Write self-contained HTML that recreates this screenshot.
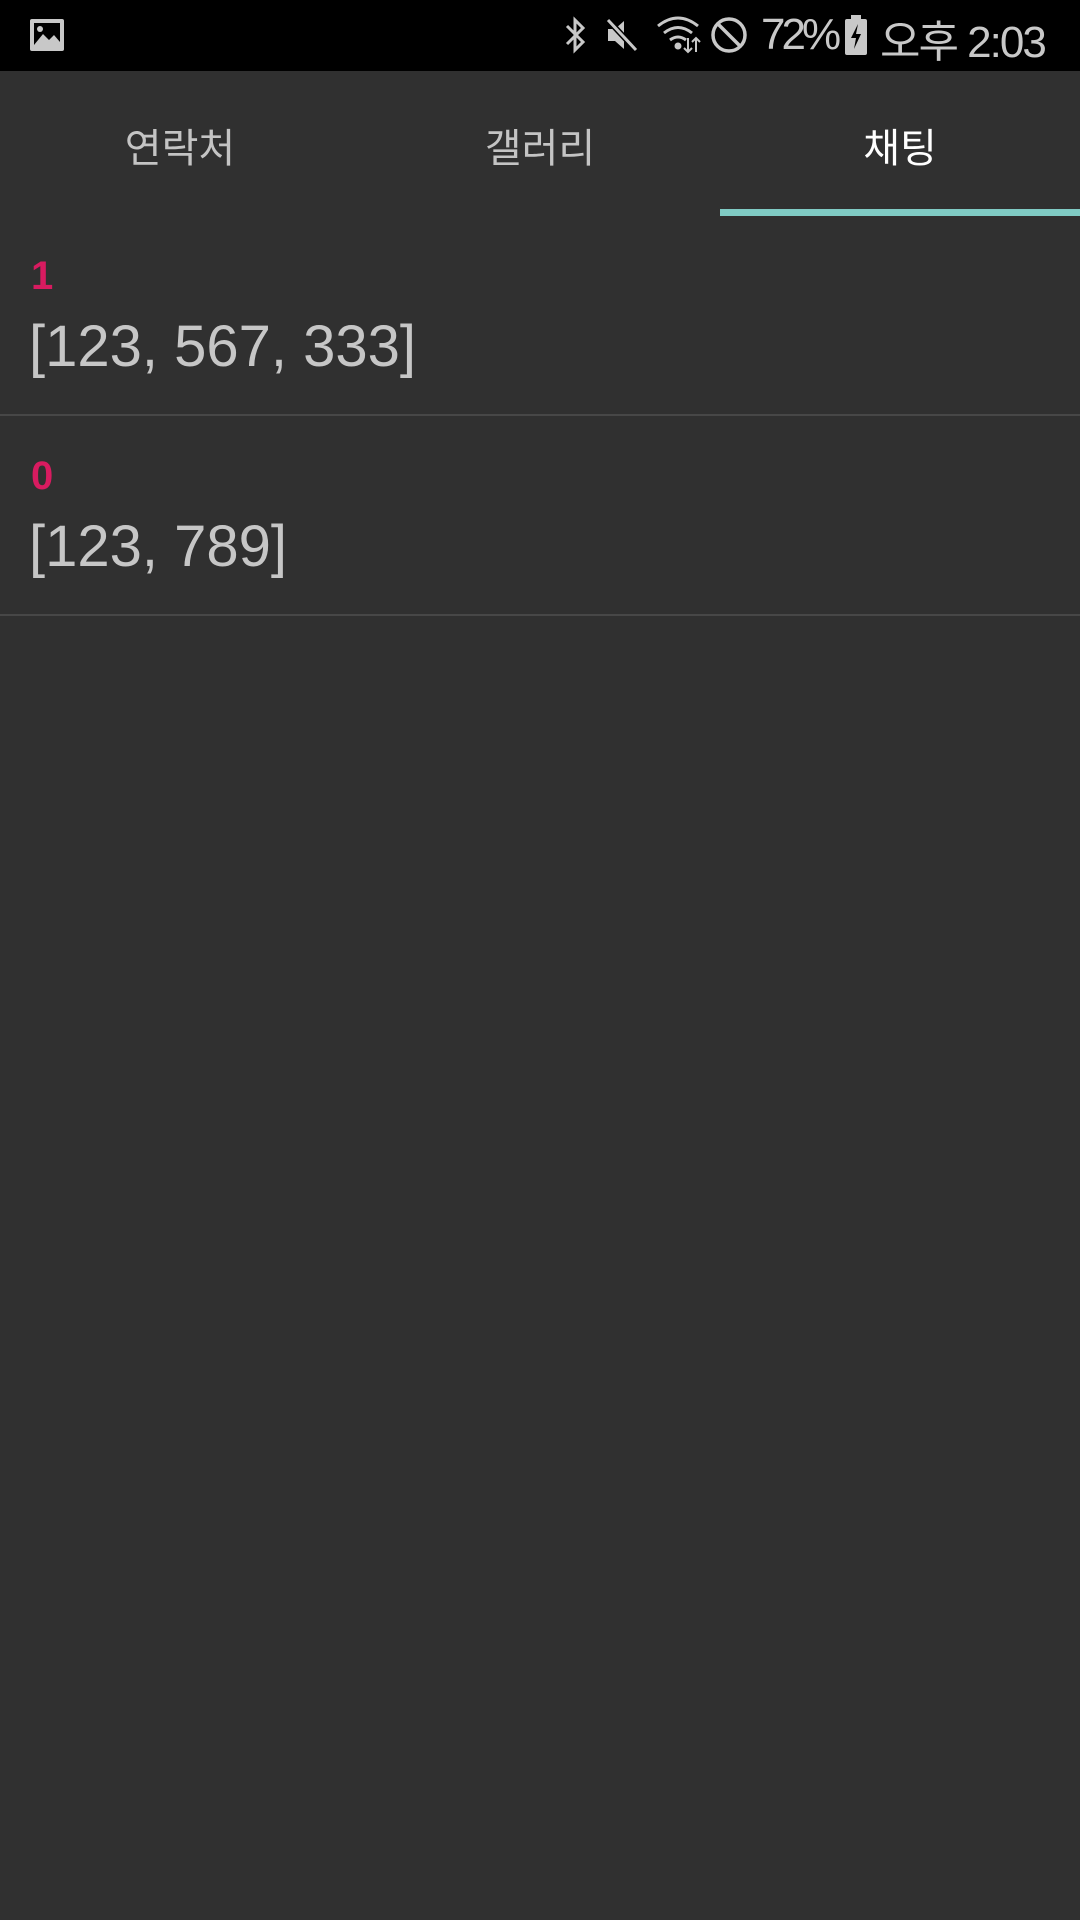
<!DOCTYPE html>
<html><head><meta charset="utf-8"><style>
body{margin:0;width:1080px;height:1920px;background:#303030;font-family:"Liberation Sans","Noto Sans CJK KR",sans-serif;overflow:hidden;position:relative}
.sb{position:absolute;left:0;top:0;width:1080px;height:71px;background:#000;color:#c8c8c8}
.tabs{position:absolute;top:71px;left:0;width:1080px;height:145px}
.tab{position:absolute;width:360px;height:145px;line-height:145px;text-align:center;font-size:40px;color:#c4c4c4;top:6px}
.ind{position:absolute;left:720px;top:209px;width:360px;height:7px;background:#80cbc4}
.item{position:absolute;left:0;width:1080px;border-bottom:2px solid #474747}
.n{position:absolute;left:31px;font-size:40px;font-weight:bold;color:#d81b60}
.t{position:absolute;left:29px;font-size:58px;color:#c6c6c6;white-space:nowrap}
</style></head><body>
<div class="sb">
<svg style="position:absolute;left:29px;top:18px" width="36" height="34" viewBox="0 0 36 34"><rect x="1" y="1" width="34" height="32" rx="2" fill="#c8c8c8"/><rect x="5" y="5" width="26" height="22" fill="#000"/><circle cx="11" cy="11" r="3" fill="#c8c8c8"/><path d="M5 27 L14 16 L20 22 L25 17 L31 24 L31 27Z" fill="#c8c8c8"/></svg>
<svg style="position:absolute;left:562px;top:15px" width="28" height="40" viewBox="0 0 28 40" fill="none" stroke="#c8c8c8" stroke-width="3"><path d="M5 11 L21 27 L13 35 L13 5 L21 13 L5 29"/></svg>
<svg style="position:absolute;left:604px;top:16px" width="36" height="38" viewBox="0 0 36 38"><path d="M4 13 H11 L20 5 V33 L11 25 H4Z" fill="#c8c8c8"/><path d="M4 4 L32 34" stroke="#000" stroke-width="6"/><path d="M4 4 L32 34" stroke="#c8c8c8" stroke-width="3"/></svg>
<svg style="position:absolute;left:656px;top:14px" width="46" height="40" viewBox="0 0 46 40" fill="none" stroke="#c8c8c8" stroke-width="3"><path d="M2 12 Q22 -4 42 12"/><path d="M8 19 Q22 8 36 19"/><path d="M14 26 Q22 20 30 26"/><circle cx="22" cy="32" r="2" fill="#c8c8c8"/><path d="M32 24 V38 M28 34 L32 38 L36 34 M40 38 V24 M36 28 L40 24 L44 28" stroke-width="2"/></svg>
<svg style="position:absolute;left:710px;top:16px" width="38" height="38" viewBox="0 0 38 38" fill="none" stroke="#c8c8c8" stroke-width="3.5"><circle cx="19" cy="19" r="16"/><path d="M8 8 L30 30"/></svg>
<div style="position:absolute;left:761px;top:10px;font-size:44px;letter-spacing:-4px">72%</div>
<svg style="position:absolute;left:844px;top:15px" width="24" height="40" viewBox="0 0 24 40"><rect x="7" y="0" width="10" height="4" fill="#c8c8c8"/><rect x="1" y="4" width="22" height="36" rx="2" fill="#c8c8c8"/><path d="M14 9 L7 23 H12 L10 34 L17 19 H12Z" fill="#000"/></svg>
<div style="position:absolute;left:880px;top:6px;font-size:44px;letter-spacing:-2px">오후 2:03</div>
</div>
<div class="tabs">
<div class="tab" style="left:0">연락처</div>
<div class="tab" style="left:360px">갤러리</div>
<div class="tab" style="left:720px;color:#fff">채팅</div>
</div>
<div class="ind"></div>
<div class="item" style="top:216px;height:198px"><div class="n" style="top:38px">1</div><div class="t" style="top:97px">[123, 567, 333]</div></div>
<div class="item" style="top:416px;height:198px"><div class="n" style="top:38px">0</div><div class="t" style="top:97px">[123, 789]</div></div>
</body></html>
